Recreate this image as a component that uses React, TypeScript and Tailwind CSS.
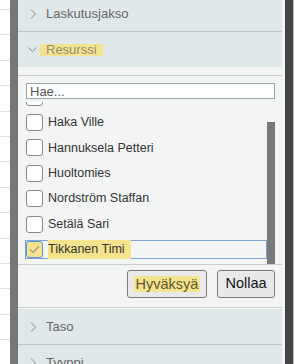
import React from 'react';

// Resources shown in the list (first one is scrolled mostly out of view)
const people = [
  { name: 'Ekholm Jari', checked: false },
  { name: 'Haka Ville', checked: false },
  { name: 'Hannuksela Petteri', checked: false },
  { name: 'Huoltomies', checked: false },
  { name: 'Nordström Staffan', checked: false },
  { name: 'Setälä Sari', checked: false },
  { name: 'Tikkanen Timi', checked: true },
  { name: 'Virtanen Ari', checked: false },
];

const ChevronRight = () => (
  <svg width="10" height="10" viewBox="0 0 10 10" className="shrink-0">
    <polyline points="3,0.5 7.5,5 3,9.5" fill="none" stroke="#8a8a8a" strokeWidth="1" />
  </svg>
);

const ChevronDown = () => (
  <svg width="10" height="6" viewBox="0 0 10 6" className="shrink-0">
    <polyline points="0.5,0.5 4.5,4.5 8.5,0.5" fill="none" stroke="#8a8a8a" strokeWidth="1" />
  </svg>
);

const Header = ({ title, tall = false }: { title: string; tall?: boolean }) => (
  <div
    className={`flex ${tall ? 'h-[36px]' : 'h-[35px]'} items-center gap-[8px] border-b border-[#bcc5c7] bg-[#e1e8ea] pl-[10px] text-[13px] text-[#666]`}
  >
    <div className="flex w-[10px] justify-center"><ChevronRight /></div>
    <span>{title}</span>
  </div>
);

const App: React.FC = () => {
  return (
    <div className="flex h-[364px] w-[302px] overflow-hidden bg-white font-['Liberation_Sans',Arial,sans-serif]">
      {/* Table rows behind the overlay */}
      <div className="w-[10px] shrink-0 -mt-[15.4px]">
        {Array.from({ length: 16 }).map((_, i) => (
          <div key={i} className="h-[25.4px] border-b border-[#e2e2e2]" />
        ))}
      </div>
      <div className="w-[8px] shrink-0 bg-[#777]" />

      {/* Filter panel */}
      <div className="flex w-[267px] shrink-0 flex-col bg-[#f3f5f5] pr-[3px]">
        <div className="-mt-[3px]">
          <Header title="Laskutusjakso" />
          <div className="flex h-[35px] items-center gap-[8px] bg-[#e1e8ea] pl-[10px] text-[13px]">
            <div className="flex w-[10px] justify-center"><ChevronDown /></div>
            <span className="-mx-[6px] bg-[#f5e38d] px-[6px] leading-[12px] text-[#8f8c78]">Resurssi</span>
          </div>
        </div>

        <div className="mt-[8px] border-t border-[#c9cdcd] px-[8px] pr-[7px] pt-[7px]">
          <input
            readOnly
            placeholder="Hae..."
            className="block h-[16px] w-full border border-[#93a5a5] bg-white px-[3px] text-[13px] leading-[14px] text-[#333] outline-none placeholder:text-[#555]"
          />
        </div>

        <div className="mt-[3px] flex h-[162px] pr-[7px]">
          <div className="flex-1 overflow-hidden pl-[7px]">
            <div className="-mt-[17.6px]">
              {people.map((p) => (
                <div key={p.name} className="flex h-[25.4px] items-center">
                  <label
                    className={`flex h-[19px] w-[242px] items-center gap-[5px] border ${p.checked ? 'border-[#7ea3d6]' : 'border-transparent'}`}
                  >
                    <span
                      className={`flex h-[17px] w-[17px] shrink-0 items-center justify-center rounded-[3px] border ${
                        p.checked ? 'border-[#5c8fd8] bg-[#f5e38d]' : 'border-[#888] bg-white'
                      }`}
                    >
                      {p.checked && (
                        <svg width="11" height="9" viewBox="0 0 11 9">
                          <polyline points="1,4.5 4,7.5 10,1.5" fill="none" stroke="#9a9a9a" strokeWidth="1.2" />
                        </svg>
                      )}
                    </span>
                    <span className={`text-[12.5px] text-[#333] ${p.checked ? 'bg-[#f5e38d] pr-[6px] text-[#6e6440]' : ''}`}>
                      {p.name}
                    </span>
                  </label>
                </div>
              ))}
            </div>
          </div>
          {/* Scrollbar */}
          <div className="w-[8px] shrink-0 pt-[20px]">
            <div className="h-[142px] bg-[#797979]" />
          </div>
        </div>

        <div className="flex justify-end gap-[10px] border-t border-[#c9cdcd] pb-[9px] pr-[7px] pt-[5px]">
          <button className="flex h-[28px] w-[80px] items-center justify-center rounded-[3px] border border-[#7a7a7a] bg-[#e9e9e9] text-[14.5px] text-[#5e5430]">
            <span className="bg-[#f5e38d] px-[2px] leading-[16px]">Hyväksyä</span>
          </button>
          <button className="flex h-[28px] w-[58px] items-center justify-center rounded-[3px] border border-[#7a7a7a] bg-[#e9e9e9] text-[14.5px] text-[#111]">
            Nollaa
          </button>
        </div>

        <div className="border-t border-[#c9cdcd] pt-[1px]">
          <Header title="Taso" tall />
          <Header title="Tyyppi" tall />
        </div>
      </div>

      <div className="w-[8px] shrink-0 bg-[#444]" />
      <div className="w-[1px] shrink-0 bg-[#bdbdbd]" />
      <div className="flex-1 bg-white" />
    </div>
  );
};

export default App;
